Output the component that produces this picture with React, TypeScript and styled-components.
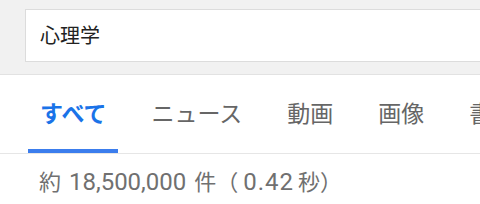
import styled, { createGlobalStyle } from 'styled-components';

const tabs = ['すべて', 'ニュース', '動画', '画像', '書籍'];

const GlobalStyle = createGlobalStyle`
  html, body {
    margin: 0;
    padding: 0;
    background: #fff;
  }

  body {
    font-family: Roboto, "Noto Sans CJK JP", sans-serif;
  }
`;

function App() {
  return (
    <Page>
      <GlobalStyle />
      <Header>
        <SearchBox>
          <Query>心理学</Query>
        </SearchBox>
      </Header>
      <TabBar>
        {tabs.map((label, i) => (
          <Tab key={label} $active={i === 0}>
            {label}
          </Tab>
        ))}
      </TabBar>
      <Stats>
        約 <Num>18,500,000</Num> 件（<Seconds>0.42</Seconds>秒）
      </Stats>
    </Page>
  );
}

const Page = styled.div`
  width: 480px;
  height: 204px;
  overflow: hidden;
  background: #fff;
`;

const Header = styled.div`
  display: flex;
  height: 75px;
  padding: 9px 0 0 25px;
  box-sizing: border-box;
  overflow: hidden;
  background: #f1f1f1;
  border-bottom: 1px solid #e2e2e2;
`;

const SearchBox = styled.div`
  display: flex;
  align-items: center;
  flex: 0 0 auto;
  width: 480px;
  height: 53px;
  padding-left: 14px;
  box-sizing: border-box;
  background: #fff;
  border: 1px solid #dcdcdc;
`;

const Query = styled.span`
  font-size: 20px;
  color: #222;
  font-family: "Noto Sans CJK JP", sans-serif;
  margin-top: -3px;
`;

const TabBar = styled.div`
  display: flex;
  gap: 21px;
  padding-left: 28px;
  overflow: hidden;
  white-space: nowrap;
  border-bottom: 1px solid #e6e6e6;
`;

const Tab = styled.div<{ $active?: boolean }>`
  display: flex;
  align-items: center;
  flex: 0 0 auto;
  height: 74px;
  padding: 0 12px;
  font-family: "Noto Sans CJK JP", sans-serif;
  font-size: 23px;
  font-weight: ${({ $active }) => ($active ? 700 : 400)};
  color: ${({ $active }) => ($active ? '#1a73e8' : '#666')};
  border-bottom: 4px solid ${({ $active }) => ($active ? '#3b7ded' : 'transparent')};
`;

const Stats = styled.div`
  padding: 11px 0 0 39px;
  font-family: "Noto Sans CJK JP", sans-serif;
  font-size: 22px;
  line-height: 30px;
  color: #707070;
  white-space: nowrap;
  word-spacing: 3px;
`;

const Num = styled.span`
  font-family: Roboto, sans-serif;
  font-size: 24px;
`;

const Seconds = styled(Num)`
  margin: 0 4px 0 5px;
  letter-spacing: 1px;
`;

export default App;
